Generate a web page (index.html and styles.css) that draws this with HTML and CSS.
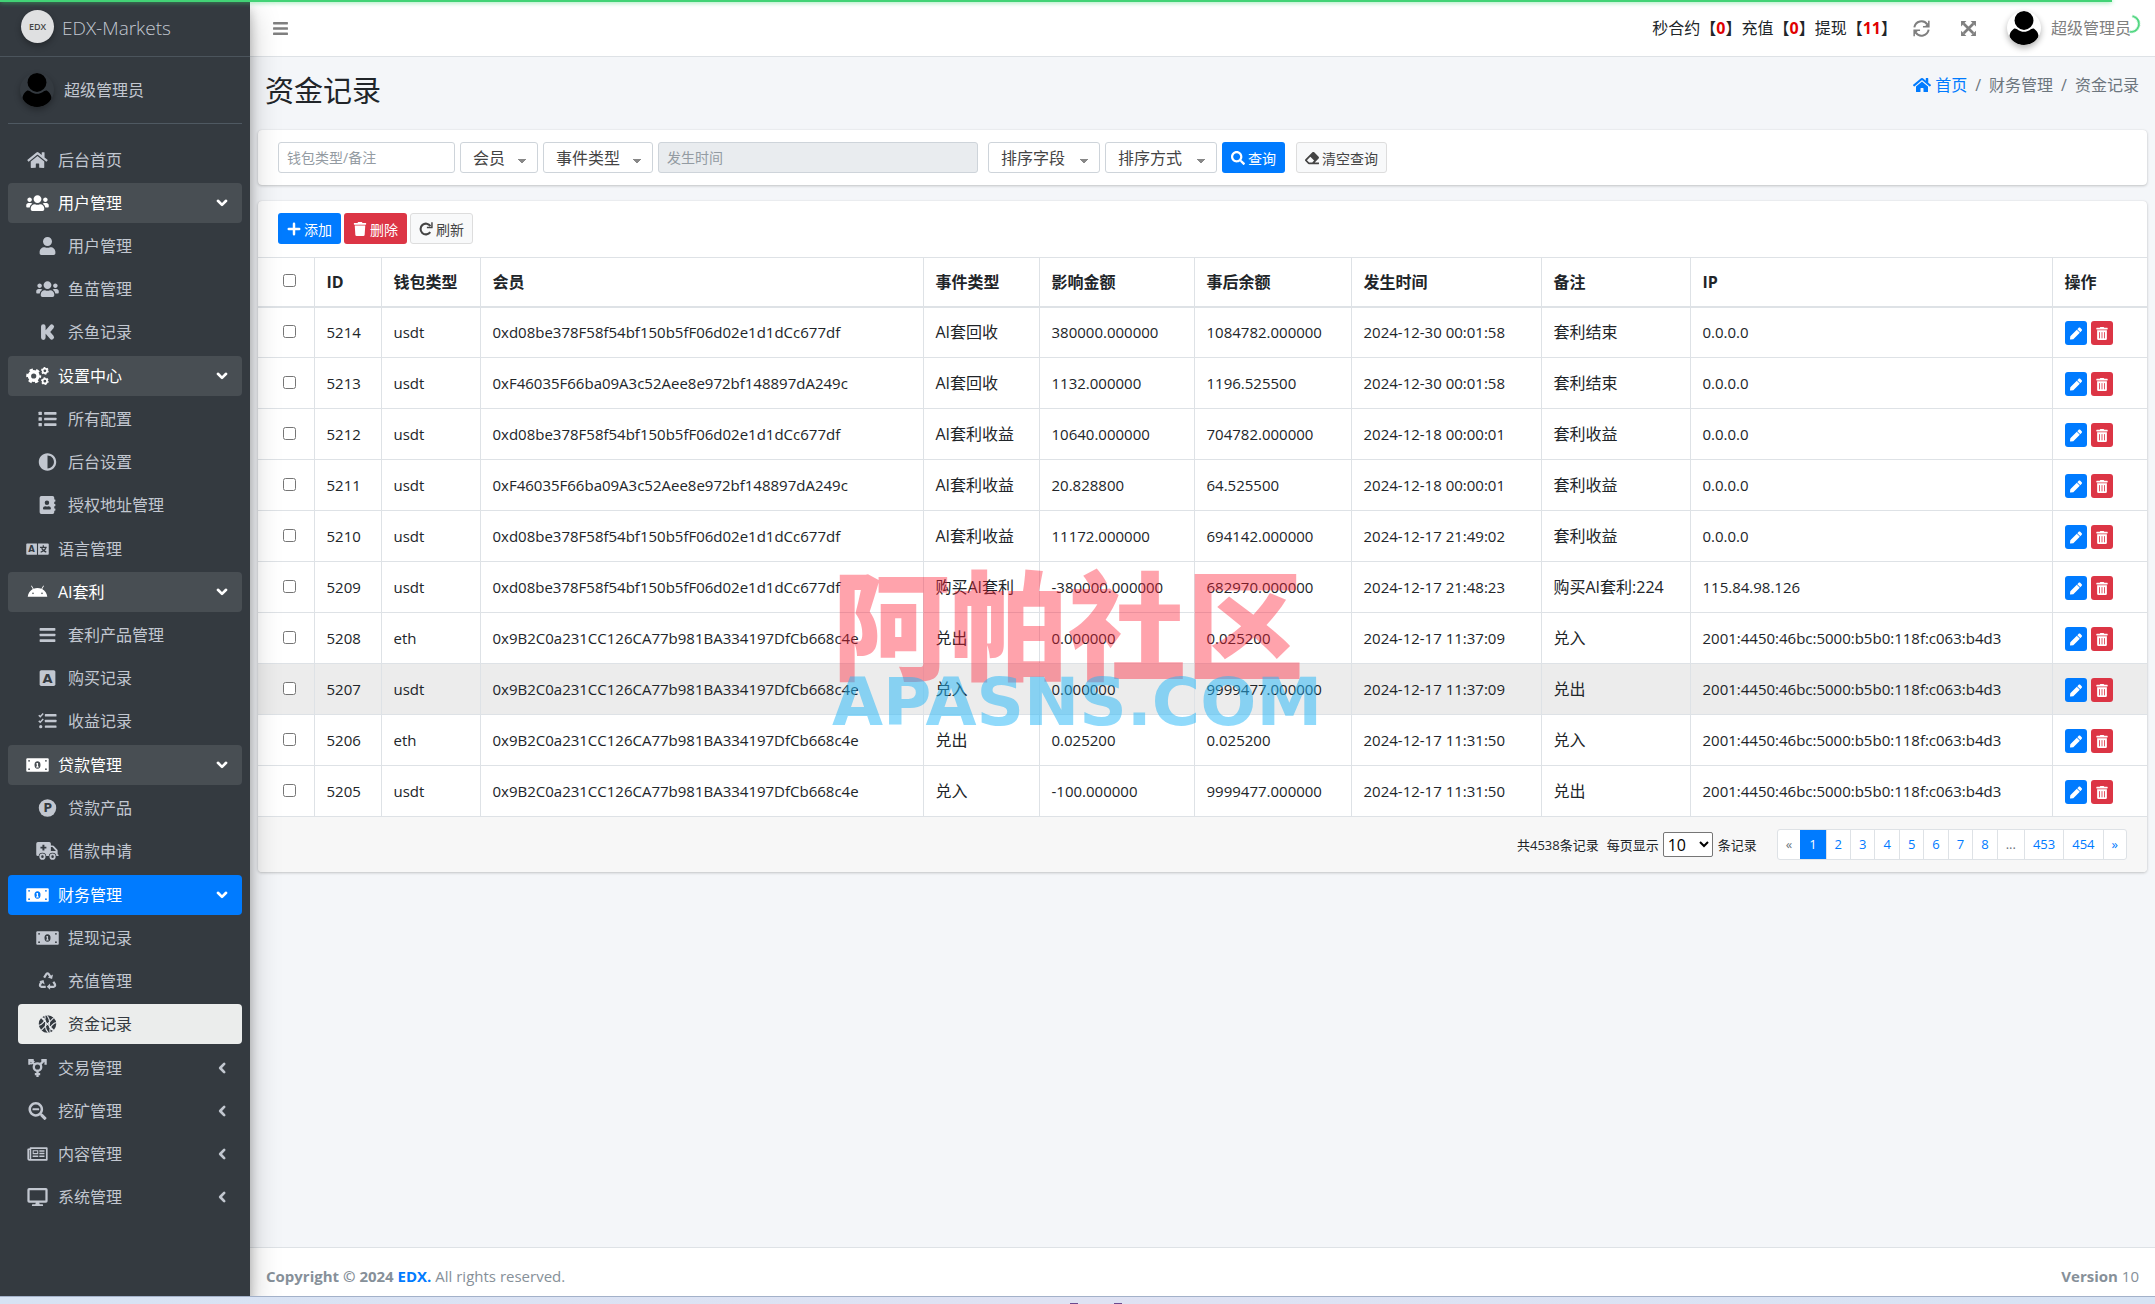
FILE: index.html
```
<!DOCTYPE html>
<html lang="zh-CN">

<head>
    <meta charset="UTF-8">
    <meta name="viewport" content="width=device-width, initial-scale=1.0">
    <title>资金记录</title>
    <link rel="stylesheet" href="styles.css">
</head>

<body>

    <!-- 图标 -->
    <svg class="sprite" aria-hidden="true">
        <symbol id="i-home" viewBox="0 0 576 512"><path d="M280.37 148.26L96 300.11V464a16 16 0 0 0 16 16l112.06-.29a16 16 0 0 0 15.92-16V368a16 16 0 0 1 16-16h64a16 16 0 0 1 16 16v95.64a16 16 0 0 0 16 16.05L464 480a16 16 0 0 0 16-16V300L295.67 148.26a12.19 12.19 0 0 0-15.3 0zM571.6 251.47L488 182.56V44.05a12 12 0 0 0-12-12h-56a12 12 0 0 0-12 12v72.61L318.47 43a48 48 0 0 0-61 0L4.34 251.47a12 12 0 0 0-1.6 16.9l25.5 31A12 12 0 0 0 45.15 301l235.22-193.74a12.19 12.19 0 0 1 15.3 0L530.9 301a12 12 0 0 0 16.9-1.6l25.5-31a12 12 0 0 0-1.7-16.93z"/></symbol>
        <symbol id="i-users" viewBox="0 0 640 512"><path d="M96 224c35.3 0 64-28.7 64-64s-28.7-64-64-64-64 28.7-64 64 28.7 64 64 64zm448 0c35.3 0 64-28.7 64-64s-28.7-64-64-64-64 28.7-64 64 28.7 64 64 64zm32 32h-64c-17.6 0-33.5 7.1-45.1 18.6 40.3 22.1 68.9 62 75.1 109.4h66c17.7 0 32-14.3 32-32v-32c0-35.3-28.7-64-64-64zm-256 0c61.9 0 112-50.1 112-112S381.9 32 320 32 208 82.1 208 144s50.1 112 112 112zm76.8 32h-8.3c-20.8 10-43.9 16-68.5 16s-47.6-6-68.5-16h-8.3C179.6 288 128 339.6 128 403.2V432c0 26.5 21.5 48 48 48h288c26.5 0 48-21.5 48-48v-28.8c0-63.6-51.6-115.2-115.2-115.2zm-223.7-13.4C161.5 263.1 145.6 256 128 256H64c-35.3 0-64 28.7-64 64v32c0 17.7 14.3 32 32 32h65.9c6.3-47.4 34.9-87.3 75.2-109.4z"/></symbol>
        <symbol id="i-user" viewBox="0 0 448 512"><path d="M224 256c70.7 0 128-57.3 128-128S294.7 0 224 0 96 57.3 96 128s57.3 128 128 128zm89.6 32h-16.7c-22.2 10.2-46.9 16-72.9 16s-50.6-5.8-72.9-16h-16.7C60.2 288 0 348.2 0 422.4V464c0 26.5 21.5 48 48 48h352c26.5 0 48-21.5 48-48v-41.6c0-74.2-60.2-134.4-134.4-134.4z"/></symbol>
        <symbol id="i-avatar" viewBox="0 0 34 36"><circle cx="17" cy="10" r="10"/><path d="M6 19c3-2 5 3 11 3s8-5 11-3c3 2 5 6 4 9-2 5-8 8-15 8S4 33 2 28c-1-3 1-7 4-9z"/></symbol>
        <symbol id="i-k" viewBox="0 0 448 512"><g fill="none" stroke="currentColor" stroke-width="130" stroke-linecap="round" stroke-linejoin="round"><path d="M105 97v318M345 105L215 256l130 151"/></g></symbol>
        <symbol id="i-cogs" viewBox="0 0 640 512"><g fill="none" stroke="currentColor"><circle cx="212" cy="256" r="122" stroke-width="96"/><circle cx="212" cy="256" r="182" stroke-width="62" stroke-dasharray="95 95.600" stroke-dashoffset="46"/><circle cx="530" cy="110" r="64" stroke-width="48"/><circle cx="530" cy="110" r="94" stroke-width="32" stroke-dasharray="50 48.400"/><circle cx="530" cy="402" r="64" stroke-width="48"/><circle cx="530" cy="402" r="94" stroke-width="32" stroke-dasharray="50 48.400"/></g></symbol>
        <symbol id="i-list" viewBox="0 0 512 512"><rect y="48" width="96" height="96" rx="16"/><rect y="208" width="96" height="96" rx="16"/><rect y="368" width="96" height="96" rx="16"/><rect x="160" y="60" width="352" height="72" rx="16"/><rect x="160" y="220" width="352" height="72" rx="16"/><rect x="160" y="380" width="352" height="72" rx="16"/></symbol>
        <symbol id="i-adjust" viewBox="0 0 512 512"><path d="M8 256c0 136.966 111.033 248 248 248s248-111.034 248-248S392.966 8 256 8 8 119.033 8 256zm248 184V72c101.705 0 184 82.311 184 184 0 101.705-82.311 184-184 184z"/></symbol>
        <symbol id="i-book" viewBox="0 0 448 512"><path fill-rule="evenodd" d="M48 0h320a48 48 0 0 1 48 48v48h20a12 12 0 0 1 12 12v40a12 12 0 0 1-12 12h-20v64h20a12 12 0 0 1 12 12v40a12 12 0 0 1-12 12h-20v64h20a12 12 0 0 1 12 12v40a12 12 0 0 1-12 12h-20v48a48 48 0 0 1-48 48H48a48 48 0 0 1-48-48V48A48 48 0 0 1 48 0zm160 128a64 64 0 1 0 0 128 64 64 0 0 0 0-128zM96 365c0 12 10 19 22 19h180c12 0 22-7 22-19v-19c0-32-30-58-67-58-12 0-20 8-45 8s-33-8-45-8c-37 0-67 26-67 58z"/></symbol>
        <symbol id="i-language" viewBox="0 0 640 512"><path fill-rule="evenodd" d="M24 96h280v320H24a24 24 0 0 1-24-24V120a24 24 0 0 1 24-24zM336 96h280a24 24 0 0 1 24 24v272a24 24 0 0 1-24 24H336z"/><g class="cut"><text x="152" y="340" font-size="240" text-anchor="middle">A</text><path d="M390 190h190v36H390zM468 150h34v60h-34zM540 215h38c-15 70-75 120-160 150l-16-34c75-25 120-60 138-116zM425 240l28-18c30 50 70 85 125 105l-16 36c-65-25-110-65-137-123z"/></g></symbol>
        <symbol id="i-android" viewBox="0 0 576 512"><path fill-rule="evenodd" d="M421 170l46-80a11 11 0 0 0-19-11l-48 83a302 302 0 0 0-224 0l-48-83a11 11 0 0 0-19 11l46 80C72 214 18 296 10 392h556c-8-96-62-178-145-222zM160 318a23 23 0 1 1 0-46 23 23 0 0 1 0 46zm256 0a23 23 0 1 1 0-46 23 23 0 0 1 0 46z"/></symbol>
        <symbol id="i-bars" viewBox="0 0 448 512"><rect y="60" width="448" height="72" rx="16"/><rect y="220" width="448" height="72" rx="16"/><rect y="380" width="448" height="72" rx="16"/></symbol>
        <symbol id="i-a" viewBox="0 0 448 512"><rect y="32" width="448" height="448" rx="48"/><text class="cut" x="224" y="390" font-size="370" text-anchor="middle">A</text></symbol>
        <symbol id="i-tasks" viewBox="0 0 512 512"><g fill="none" stroke="currentColor" stroke-width="42"><path d="M8 92l42 40 84-92M8 252l42 40 84-92"/></g><circle cx="64" cy="416" r="46"/><rect x="180" y="60" width="332" height="68" rx="16"/><rect x="180" y="222" width="332" height="68" rx="16"/><rect x="180" y="382" width="332" height="68" rx="16"/></symbol>
        <symbol id="i-money" viewBox="0 0 640 512"><rect y="64" width="640" height="384" rx="32"/><g class="cut"><ellipse cx="320" cy="256" rx="86" ry="104"/><circle cx="80" cy="138" r="26"/><circle cx="560" cy="138" r="26"/><circle cx="80" cy="374" r="26"/><circle cx="560" cy="374" r="26"/></g><path d="M296 196h40v104h20v28h-76v-28h20v-66h-20z"/></symbol>
        <symbol id="i-p" viewBox="0 0 512 512"><circle cx="256" cy="256" r="248"/><text class="cut" x="262" y="374" font-size="330" text-anchor="middle">P</text></symbol>
        <symbol id="i-ambulance" viewBox="0 0 640 512"><path fill-rule="evenodd" d="M48 0h320a48 48 0 0 1 48 48v48h44c13 0 25 5 34 14l100 100c9 9 14 21 14 34v108h8c13 0 24 11 24 24s-11 24-24 24H48a48 48 0 0 1-48-48V48A48 48 0 0 1 48 0zm368 144v112h144L460 144zM176 80v56h-56v48h56v56h56v-56h56v-48h-56V80z"/><circle class="cut" cx="176" cy="416" r="110"/><circle class="cut" cx="464" cy="416" r="110"/><g fill="none" stroke="currentColor" stroke-width="52"><circle cx="176" cy="416" r="62"/><circle cx="464" cy="416" r="62"/></g></symbol>
        <symbol id="i-recycle" viewBox="0 0 512 512"><g fill="none" stroke="currentColor" stroke-width="64" stroke-linejoin="round"><path d="M160 160l64-104q32-36 64 0l48 78M424 276l44 76q18 60-38 68H316M206 420H84q-56-8-38-68l50-84"/></g><path d="M266 158l120 40 26-128zM330 328v176l-96-88zM22 262l120-34 34 124z"/></symbol>
        <symbol id="i-ball" viewBox="0 0 512 512"><circle cx="256" cy="256" r="248"/><g class="hole"><path d="M70 70l372 372M442 70L70 442M170 0q50 120-30 210T0 300M342 512q-50-120 30-210t140-90M230 0q110 130 80 256t120 190M282 512q-110-130-80-256T82 66"/></g></symbol>
        <symbol id="i-gender" viewBox="0 0 512 512"><g fill="none" stroke="currentColor" stroke-width="66"><circle cx="256" cy="228" r="106"/><path d="M256 334v178M180 430h152M180 152L56 28M332 152L456 28M26 160V32h122M486 160V32H364M72 142l88-88"/></g></symbol>
        <symbol id="i-minus" viewBox="0 0 512 512"><path d="M505 442.7L405.3 343c-4.500-4.500-10.600-7-17-7H372c27.600-35.300 44-79.700 44-128C416 93.100 322.900 0 208 0S0 93.100 0 208s93.100 208 208 208c48.300 0 92.700-16.400 128-44v16.300c0 6.400 2.500 12.500 7 17l99.700 99.700c9.400 9.400 24.600 9.400 33.900 0l28.300-28.300c9.400-9.400 9.400-24.600.1-34zM208 346a138 138 0 1 1 0-276 138 138 0 0 1 0 276z"/><rect x="114" y="180" width="188" height="56" rx="12"/></symbol>
        <symbol id="i-news" viewBox="0 0 576 512"><path fill-rule="evenodd" d="M552 64H88c-13 0-24 11-24 24v8H24c-13 0-24 11-24 24v272c0 31 25 56 56 56h496c13 0 24-11 24-24V88c0-13-11-24-24-24zM56 400a8 8 0 0 1-8-8V144h16v248a8 8 0 0 1-8 8zm54 0V112h418v288zM150 150h160v110H150zm30 30v50h100v-50zM340 150h146v40H340zM340 220h146v40H340zM150 300h160v44H150zM340 300h146v44H340z"/></symbol>
        <symbol id="i-desktop" viewBox="0 0 576 512"><path fill-rule="evenodd" d="M528 0H48a48 48 0 0 0-48 48v320a48 48 0 0 0 48 48h192l-16 48h-72a24 24 0 0 0 0 48h272a24 24 0 0 0 0-48h-72l-16-48h192a48 48 0 0 0 48-48V48a48 48 0 0 0-48-48zM512 352H64V64h448z"/></symbol>
        <symbol id="i-angle" viewBox="0 0 256 512"><path d="M190 140L76 256l114 116" fill="none" stroke="currentColor" stroke-width="76" stroke-linejoin="round" stroke-linecap="round"/></symbol>
        <symbol id="i-plus" viewBox="0 0 448 512"><path d="M224 64v384M32 256h384" fill="none" stroke="currentColor" stroke-width="90" stroke-linecap="round"/></symbol>
        <symbol id="i-trash" viewBox="0 0 448 512"><path d="M432 32H312l-9.400-18.700A24 24 0 0 0 281.100 0H166.800a23.720 23.720 0 0 0-21.400 13.300L136 32H16A16 16 0 0 0 0 48v32a16 16 0 0 0 16 16h416a16 16 0 0 0 16-16V48a16 16 0 0 0-16-16zM53.200 467a48 48 0 0 0 47.900 45h245.800a48 48 0 0 0 47.900-45L416 128H32z"/></symbol>
        <symbol id="i-trash-alt" viewBox="0 0 448 512"><path d="M32 464a48 48 0 0 0 48 48h288a48 48 0 0 0 48-48V128H32zm272-256a16 16 0 0 1 32 0v224a16 16 0 0 1-32 0zm-96 0a16 16 0 0 1 32 0v224a16 16 0 0 1-32 0zm-96 0a16 16 0 0 1 32 0v224a16 16 0 0 1-32 0zM432 32H312l-9.400-18.700A24 24 0 0 0 281.100 0H166.800a23.720 23.720 0 0 0-21.400 13.300L136 32H16A16 16 0 0 0 0 48v32a16 16 0 0 0 16 16h416a16 16 0 0 0 16-16V48a16 16 0 0 0-16-16z"/></symbol>
        <symbol id="i-pen" viewBox="0 0 512 512"><path d="M290.740 93.240l128.020 128.020-277.990 277.990-114.140 12.600C11.350 513.540-1.560 500.620.14 485.340l12.700-114.220 277.900-277.880zm207.200-19.060l-60.110-60.110c-18.750-18.750-49.160-18.750-67.910 0l-56.550 56.550 128.020 128.020 56.550-56.550c18.750-18.760 18.750-49.160 0-67.910z"/></symbol>
        <symbol id="i-redo" viewBox="0 0 512 512"><path d="M418 150A196 196 0 1 0 412 372" fill="none" stroke="currentColor" stroke-width="76"/><path d="M500 12v200a12 12 0 0 1-12 12H288v-46l160-4V12z"/></symbol>
        <symbol id="i-search" viewBox="0 0 512 512"><path d="M505 442.700L405.300 343c-4.500-4.500-10.600-7-17-7H372c27.600-35.300 44-79.700 44-128C416 93.100 322.900 0 208 0S0 93.100 0 208s93.100 208 208 208c48.300 0 92.700-16.400 128-44v16.300c0 6.400 2.500 12.500 7 17l99.700 99.700c9.400 9.400 24.600 9.400 33.900 0l28.300-28.300c9.400-9.400 9.400-24.600.1-34zM208 336c-70.700 0-128-57.200-128-128 0-70.700 57.200-128 128-128 70.700 0 128 57.200 128 128 0 70.700-57.200 128-128 128z"/></symbol>
        <symbol id="i-eraser" viewBox="0 0 512 512"><path d="M497.941 273.941c18.745-18.745 18.745-49.137 0-67.882l-160-160c-18.745-18.745-49.136-18.746-67.883 0l-256 256c-18.745 18.745-18.745 49.137 0 67.882l96 96A48.004 48.004 0 0 0 144 480h356c6.627 0 12-5.373 12-12v-40c0-6.627-5.373-12-12-12H355.883l142.058-142.059zm-302.627-62.627l137.373 137.373L265.373 416H150.628l-80-80 124.686-124.686z"/></symbol>
        <symbol id="i-sync" viewBox="0 0 512 512"><g fill="none" stroke="currentColor" stroke-width="60"><path d="M40 220A218 218 0 0 1 430 130M472 292A218 218 0 0 1 82 382"/></g><path d="M500 24v200H300v-46h70l84-84V24zM12 488V288h200v46h-70l-84 84v70z"/></symbol>
        <symbol id="i-expand" viewBox="0 0 448 512"><path d="M80 112l288 288M368 112L80 400" stroke="currentColor" stroke-width="80"/><path d="M0 32h160L0 192zM448 32v160L288 32zM0 480V320l160 160zM448 480H288l160-160z"/></symbol>
    </svg>

    <div class="loading-bar"></div>
    <div class="loading-spinner"></div>

    <div class="wrapper">

        <aside class="sidebar">
            <a href="#" class="brand">
                <span class="brand-logo">EDX</span>
                <span class="brand-text">EDX-Markets</span>
            </a>
            <div class="user-panel">
                <svg class="avatar"><use href="#i-avatar"/></svg>
                <a href="#">超级管理员</a>
            </div>
            <nav class="menu">
                <a href="#"><svg class="icon"><use href="#i-home"/></svg>后台首页</a>
                <a href="#" class="open"><svg class="icon"><use href="#i-users"/></svg>用户管理<svg class="arrow"><use href="#i-angle"/></svg></a>
                <div class="submenu">
                    <a href="#"><svg class="icon"><use href="#i-user"/></svg>用户管理</a>
                    <a href="#"><svg class="icon"><use href="#i-users"/></svg>鱼苗管理</a>
                    <a href="#"><svg class="icon"><use href="#i-k"/></svg>杀鱼记录</a>
                </div>
                <a href="#" class="open"><svg class="icon"><use href="#i-cogs"/></svg>设置中心<svg class="arrow"><use href="#i-angle"/></svg></a>
                <div class="submenu">
                    <a href="#"><svg class="icon"><use href="#i-list"/></svg>所有配置</a>
                    <a href="#"><svg class="icon"><use href="#i-adjust"/></svg>后台设置</a>
                    <a href="#"><svg class="icon"><use href="#i-book"/></svg>授权地址管理</a>
                </div>
                <a href="#"><svg class="icon"><use href="#i-language"/></svg>语言管理</a>
                <a href="#" class="open"><svg class="icon"><use href="#i-android"/></svg>AI套利<svg class="arrow"><use href="#i-angle"/></svg></a>
                <div class="submenu">
                    <a href="#"><svg class="icon"><use href="#i-bars"/></svg>套利产品管理</a>
                    <a href="#"><svg class="icon"><use href="#i-a"/></svg>购买记录</a>
                    <a href="#"><svg class="icon"><use href="#i-tasks"/></svg>收益记录</a>
                </div>
                <a href="#" class="open"><svg class="icon"><use href="#i-money"/></svg>贷款管理<svg class="arrow"><use href="#i-angle"/></svg></a>
                <div class="submenu">
                    <a href="#"><svg class="icon"><use href="#i-p"/></svg>贷款产品</a>
                    <a href="#"><svg class="icon"><use href="#i-ambulance"/></svg>借款申请</a>
                </div>
                <a href="#" class="open active"><svg class="icon"><use href="#i-money"/></svg>财务管理<svg class="arrow"><use href="#i-angle"/></svg></a>
                <div class="submenu">
                    <a href="#"><svg class="icon"><use href="#i-money"/></svg>提现记录</a>
                    <a href="#"><svg class="icon"><use href="#i-recycle"/></svg>充值管理</a>
                    <a href="#" class="current"><svg class="icon"><use href="#i-ball"/></svg>资金记录</a>
                </div>
                <a href="#"><svg class="icon"><use href="#i-gender"/></svg>交易管理<svg class="arrow"><use href="#i-angle"/></svg></a>
                <a href="#"><svg class="icon"><use href="#i-minus"/></svg>挖矿管理<svg class="arrow"><use href="#i-angle"/></svg></a>
                <a href="#"><svg class="icon"><use href="#i-news"/></svg>内容管理<svg class="arrow"><use href="#i-angle"/></svg></a>
                <a href="#"><svg class="icon"><use href="#i-desktop"/></svg>系统管理<svg class="arrow"><use href="#i-angle"/></svg></a>
            </nav>
        </aside>

        <div class="page">
            <header class="navbar">
                <button type="button" class="nav-btn" aria-label="菜单"><svg><use href="#i-bars"/></svg></button>
                <div class="notice">秒合约【<b>0</b>】充值【<b>0</b>】提现【<b>11</b>】</div>
                <button type="button" class="nav-btn" aria-label="刷新"><svg><use href="#i-sync"/></svg></button>
                <button type="button" class="nav-btn" aria-label="全屏"><svg><use href="#i-expand"/></svg></button>
                <a href="#" class="nav-user"><svg class="avatar"><use href="#i-avatar"/></svg>超级管理员</a>
            </header>

            <main class="content">
                <div class="content-header">
                    <h1>资金记录</h1>
                    <div class="breadcrumb">
                        <a href="#"><svg><use href="#i-home"/></svg>首页</a>
                        <span>/</span>
                        <span>财务管理</span>
                        <span>/</span>
                        <span>资金记录</span>
                    </div>
                </div>

                <form class="card filter">
                    <input type="text" class="keyword" placeholder="钱包类型/备注" aria-label="钱包类型/备注">
                    <select class="w-member" aria-label="会员"><option>会员</option></select>
                    <select class="w-type" aria-label="事件类型"><option>事件类型</option></select>
                    <input type="text" class="date" placeholder="发生时间" aria-label="发生时间" readonly>
                    <select class="w-sort" aria-label="排序字段"><option>排序字段</option></select>
                    <select class="w-sort" aria-label="排序方式"><option>排序方式</option></select>
                    <button type="button" class="btn primary"><svg><use href="#i-search"/></svg>查询</button>
                    <button type="button" class="btn light clear"><svg><use href="#i-eraser"/></svg>清空查询</button>
                </form>

                <div class="card">
                    <div class="toolbar">
                        <button type="button" class="btn primary"><svg><use href="#i-plus"/></svg>添加</button>
                        <button type="button" class="btn danger"><svg><use href="#i-trash"/></svg>删除</button>
                        <button type="button" class="btn light"><svg><use href="#i-redo"/></svg>刷新</button>
                    </div>

                    <table>
                        <colgroup>
                            <col class="c-check">
                            <col class="c-id">
                            <col class="c-wallet">
                            <col class="c-member">
                            <col class="c-type">
                            <col class="c-amount">
                            <col class="c-after">
                            <col class="c-time">
                            <col class="c-note">
                            <col>
                            <col class="c-action">
                        </colgroup>
                        <thead>
                            <tr>
                                <th><input type="checkbox" aria-label="全选"></th>
                                <th>ID</th>
                                <th>钱包类型</th>
                                <th>会员</th>
                                <th>事件类型</th>
                                <th>影响金额</th>
                                <th>事后余额</th>
                                <th>发生时间</th>
                                <th>备注</th>
                                <th>IP</th>
                                <th>操作</th>
                            </tr>
                        </thead>
                        <tbody id="rows"></tbody>
                    </table>

                    <div class="card-footer">
                        <span>共4538条记录</span>
                        <label for="pageSize">每页显示</label>
                        <select id="pageSize"><option>10</option></select>
                        <span>条记录</span>
                        <div class="pagination">
                            <span class="edge">«</span>
                            <span class="on">1</span>
                            <a href="#">2</a>
                            <a href="#">3</a>
                            <a href="#">4</a>
                            <a href="#">5</a>
                            <a href="#">6</a>
                            <a href="#">7</a>
                            <a href="#">8</a>
                            <span>...</span>
                            <a href="#">453</a>
                            <a href="#">454</a>
                            <a href="#">»</a>
                        </div>
                    </div>
                </div>
            </main>

            <footer class="footer">
                <p><b>Copyright © 2024 <a href="#">EDX.</a></b> All rights reserved.</p>
                <p><b>Version</b> 10</p>
            </footer>
        </div>
    </div>

    <div class="taskbar"><i></i><i></i></div>

    <div class="watermark">
        <div class="wm-cn">阿帕社区</div>
        <div class="wm-en">APASNS.COM</div>
    </div>

    <script src="script.js"></script>
</body>

</html>
```
FILE: styles.css
```
* {
    margin: 0;
    padding: 0;
    box-sizing: border-box;
}

body {
    font-family: "Open Sans", "Noto Sans CJK SC", sans-serif;
    font-size: 16px;
    line-height: 24px;
    color: #212529;
    background-color: #f4f6f9;
    display: flex;
    flex-direction: column;
    min-height: 100vh;
}

a {
    color: #007bff;
    text-decoration: none;
}

button,
input,
select {
    font-family: inherit;
    font-size: inherit;
    color: inherit;
}

button {
    cursor: pointer;
}

svg {
    fill: currentColor;
    flex: none;
}

.sprite {
    display: none;
}

.sprite text {
    font-family: "DejaVu Sans", sans-serif;
    font-weight: bold;
}

.cut {
    fill: var(--cut, #343a40);
}

.hole {
    fill: none;
    stroke: #e9ecef;
    stroke-width: 30px;
}

/* 顶部加载进度 */
.loading-bar {
    position: fixed;
    top: 0;
    left: 0;
    z-index: 20;
    width: 98%;
    height: 2px;
    background-color: #42d376;
    box-shadow: 0 0 5px #42d376;
}

.loading-spinner {
    position: fixed;
    top: 15px;
    right: 15px;
    z-index: 20;
    width: 18px;
    height: 18px;
    border: 2px solid transparent;
    border-top-color: #42d376;
    border-left-color: #42d376;
    border-radius: 50%;
    transform: rotate(145deg);
}

.wrapper {
    flex: 1;
    display: flex;
}

/* 侧边栏 */
.sidebar {
    position: relative;
    z-index: 5;
    width: 250px;
    flex: none;
    background-color: #343a40;
    color: #c2c7d0;
    box-shadow: 0 14px 28px rgba(0, 0, 0, 0.25), 0 10px 10px rgba(0, 0, 0, 0.22);
}

.sidebar a {
    color: inherit;
}

.brand {
    display: flex;
    align-items: center;
    gap: 8px;
    height: 57px;
    padding: 0 21px;
    border-bottom: 1px solid #4b545c;
    font-size: 19px;
    font-weight: 300;
}

.brand-logo {
    width: 33px;
    height: 33px;
    margin-bottom: 4px;
    border-radius: 50%;
    background-color: #dfe0e1;
    color: #444;
    font-size: 9px;
    font-weight: 600;
    line-height: 33px;
    text-align: center;
    box-shadow: 0 3px 6px rgba(0, 0, 0, 0.3);
}

.avatar {
    width: 34px;
    height: 34px;
    color: #000;
    border-radius: 50%;
    box-shadow: 0 3px 6px rgba(0, 0, 0, 0.3);
}

.user-panel {
    display: flex;
    align-items: center;
    gap: 10px;
    height: 67px;
    margin: 0 8px 16px;
    padding: 0 12px;
    border-bottom: 1px solid #4f5962;
}

.menu {
    display: flex;
    flex-direction: column;
    padding: 0 8px;
}

.menu a {
    display: flex;
    align-items: center;
    height: 40px;
    margin-bottom: 3px;
    padding: 0 16px;
    border-radius: 4px;
}

.menu .icon {
    width: 27px;
    height: 18px;
    margin-right: 7px;
}

.menu .arrow {
    width: 12px;
    height: 18px;
    margin-left: auto;
    margin-right: -2px;
}

.menu .open {
    --cut: #484e53;
    color: #fff;
    background-color: #484e53;
}

.menu .open .arrow {
    transform: rotate(-90deg);
}

.menu .active {
    --cut: #007bff;
    background-color: #007bff;
}

.submenu {
    padding: 0 0 1px 10px;
}

.menu .current {
    color: #343a40;
    background-color: #ebedec;
}

/* 顶部导航 */
.page {
    flex: 1;
    min-width: 0;
    display: flex;
    flex-direction: column;
}

.navbar {
    display: flex;
    align-items: center;
    height: 57px;
    padding: 0 24px 0 7px;
    background-color: #fff;
    border-bottom: 1px solid #dee2e6;
}

.nav-btn {
    display: flex;
    align-items: center;
    justify-content: center;
    width: 47px;
    height: 40px;
    border: none;
    background: none;
    color: #7f7f7f;
}

.nav-btn svg {
    width: 17px;
    height: 17px;
}

.notice {
    margin-left: auto;
    margin-right: 1px;
}

.notice b {
    color: #e00000;
}

.nav-user {
    display: flex;
    align-items: center;
    gap: 10px;
    margin-left: 15px;
    color: #7f7f7f;
}

/* 内容区 */
.content {
    flex: 1;
    padding: 0 8px;
}

.content-header {
    display: flex;
    justify-content: space-between;
    align-items: flex-start;
    height: 73px;
    padding: 16px 8px 0 7px;
}

h1 {
    font-size: 29px;
    font-weight: 400;
    line-height: 35px;
}

.breadcrumb {
    display: flex;
    gap: 8px;
    color: #6c757d;
}

.breadcrumb a {
    display: flex;
    align-items: center;
    gap: 4px;
}

.breadcrumb svg {
    width: 18px;
    height: 16px;
}

.card {
    margin-bottom: 16px;
    background-color: #fff;
    border-radius: 4px;
    box-shadow: 0 0 1px rgba(0, 0, 0, 0.13), 0 1px 3px rgba(0, 0, 0, 0.2);
}

.filter,
.toolbar {
    display: flex;
    gap: 4px;
    padding: 12px 20px;
}

.filter {
    gap: 5px;
}

.filter input,
.filter select {
    height: 31px;
    border: 1px solid #ced4da;
    border-radius: 3px;
    background-color: #fff;
}

.filter input {
    padding: 0 8px;
    font-size: 14px;
}

.filter input::placeholder {
    color: #939ba2;
}

.filter .keyword {
    width: 177px;
}

.filter .date {
    width: 320px;
    margin-right: 5px;
    background-color: #e9ecef;
}

.filter select {
    appearance: none;
    padding: 0 12px;
    color: #444;
    background-image: linear-gradient(to bottom right, #888 50%, transparent 50%), linear-gradient(to bottom left, #888 50%, transparent 50%);
    background-position: right 11px top 16px, right 15px top 16px;
    background-size: 4px 5px;
    background-repeat: no-repeat;
}

.filter .w-member {
    width: 78px;
}

.filter .w-type {
    width: 110px;
}

.filter .w-sort {
    width: 112px;
}

.filter .clear {
    margin-left: 6px;
}

.btn {
    display: flex;
    align-items: center;
    justify-content: center;
    gap: 3px;
    height: 31px;
    padding: 0 8px;
    border: 1px solid transparent;
    border-radius: 3px;
    font-size: 14px;
}

.btn svg {
    width: 14px;
    height: 14px;
}

.primary {
    background-color: #007bff;
    color: #fff;
}

.danger {
    background-color: #dc3545;
    color: #fff;
}

.light {
    background-color: #f8f9fa;
    border-color: #ddd;
    color: #444;
}

.toolbar {
    gap: 3px;
    padding-bottom: 13px;
}

table {
    width: 100%;
    table-layout: fixed;
    border-collapse: collapse;
}

.c-check { width: 56px; }
.c-id { width: 67px; }
.c-wallet { width: 99px; }
.c-member { width: 443px; }
.c-type { width: 116px; }
.c-amount { width: 155px; }
.c-after { width: 157px; }
.c-time { width: 190px; }
.c-note { width: 149px; }
.c-action { width: 95px; }

th,
td {
    height: 51px;
    padding: 0 12px;
    border: 1px solid #dee2e6;
    text-align: left;
    white-space: nowrap;
}

th {
    height: 49px;
    border-bottom-width: 2px;
}

th:first-child,
td:first-child {
    padding-left: 25px;
    border-left: none;
}

th:last-child,
td:last-child {
    border-right: none;
}

td {
    font-size: 15px;
}

td.cn {
    font-size: 16px;
}

tr.hover {
    background-color: #ececec;
}

input[type="checkbox"] {
    display: block;
    width: 13px;
    height: 13px;
    margin-bottom: 2px;
}

.actions {
    display: flex;
    gap: 4px;
    padding-top: 2px;
}

.actions .btn {
    width: 22px;
    height: 24px;
    padding: 0;
}

.actions svg {
    width: 12px;
    height: 13px;
}

.card-footer {
    display: flex;
    align-items: center;
    justify-content: flex-end;
    padding: 12px 20px;
    background-color: #f7f7f7;
    border-radius: 0 0 4px 4px;
    font-size: 13px;
}

.card-footer label {
    margin-left: 8px;
}

.card-footer select {
    width: 50px;
    height: 25px;
    margin: 0 5px 0 4px;
    border: 1px solid #767676;
    border-radius: 2px;
    background-color: #fff;
    font-size: 16px;
    color: #000;
}

.pagination {
    display: flex;
    margin-left: 20px;
    border: 1px solid #dee2e6;
    border-radius: 3px;
    background-color: #fff;
    overflow: hidden;
}

.pagination > * {
    padding: 0 8px;
    line-height: 29px;
    border-left: 1px solid #dee2e6;
}

.pagination span {
    color: #6c757d;
}

.pagination .edge {
    border-left: none;
}

.pagination .on {
    margin: -1px 0;
    padding: 1px 9px;
    border-left: none;
    background-color: #007bff;
    color: #fff;
}

/* 页脚 */
.footer {
    display: flex;
    justify-content: space-between;
    align-items: center;
    height: 49px;
    padding: 8px 16px 0;
    background-color: #fff;
    border-top: 1px solid #dee2e6;
    color: #869099;
    font-size: 15px;
}

.footer p {
    white-space: pre;
}

.taskbar {
    display: flex;
    justify-content: center;
    align-items: flex-end;
    gap: 36px;
    position: relative;
    z-index: 6;
    height: 8px;
    padding-left: 36px;
    border-top: 1px solid #a3b1c9;
    background: linear-gradient(to right, #d7e3f4, #dfe2f3, #d7e3f4);
}

.taskbar i {
    width: 8px;
    height: 1px;
    background-color: #6b4a8f;
}

/* 水印 */
.watermark {
    position: absolute;
    top: 565px;
    left: 832px;
    z-index: 10;
    pointer-events: none;
    white-space: nowrap;
    font-weight: 900;
}

.wm-cn {
    font-family: "Noto Sans CJK SC", sans-serif;
    font-size: 118px;
    line-height: 110px;
    color: rgba(255, 25, 47, 0.4);
}

.wm-en {
    font-family: "DejaVu Sans", sans-serif;
    font-size: 66px;
    line-height: 56px;
    color: rgba(33, 181, 247, 0.5);
}
```
FILE: script.js
```
const A = '0xd08be378F58f54bf150b5fF06d02e1d1dCc677df';
const B = '0xF46035F66ba09A3c52Aee8e972bf148897dA249c';
const C = '0x9B2C0a231CC126CA77b981BA334197DfCb668c4e';
const IP6 = '2001:4450:46bc:5000:b5b0:118f:c063:b4d3';

const data = [
    [5214, 'usdt', A, 'AI套回收', '380000.000000', '1084782.000000', '2024-12-30 00:01:58', '套利结束', '0.0.0.0'],
    [5213, 'usdt', B, 'AI套回收', '1132.000000', '1196.525500', '2024-12-30 00:01:58', '套利结束', '0.0.0.0'],
    [5212, 'usdt', A, 'AI套利收益', '10640.000000', '704782.000000', '2024-12-18 00:00:01', '套利收益', '0.0.0.0'],
    [5211, 'usdt', B, 'AI套利收益', '20.828800', '64.525500', '2024-12-18 00:00:01', '套利收益', '0.0.0.0'],
    [5210, 'usdt', A, 'AI套利收益', '11172.000000', '694142.000000', '2024-12-17 21:49:02', '套利收益', '0.0.0.0'],
    [5209, 'usdt', A, '购买AI套利', '-380000.000000', '682970.000000', '2024-12-17 21:48:23', '购买AI套利:224', '115.84.98.126'],
    [5208, 'eth', C, '兑出', '0.000000', '0.025200', '2024-12-17 11:37:09', '兑入', IP6],
    [5207, 'usdt', C, '兑入', '0.000000', '9999477.000000', '2024-12-17 11:37:09', '兑出', IP6],
    [5206, 'eth', C, '兑出', '0.025200', '0.025200', '2024-12-17 11:31:50', '兑入', IP6],
    [5205, 'usdt', C, '兑入', '-100.000000', '9999477.000000', '2024-12-17 11:31:50', '兑出', IP6]
];

document.querySelector('#rows').innerHTML = data.map(row => {
    const cells = row.map((v, i) => `<td${i === 3 || i === 7 ? ' class="cn"' : ''}>${v}</td>`).join('');
    return `<tr${row[0] === 5207 ? ' class="hover"' : ''}>
        <td><input type="checkbox" aria-label="选择 ${row[0]}"></td>
        ${cells}
        <td><div class="actions">
            <button type="button" class="btn primary" aria-label="编辑"><svg><use href="#i-pen"/></svg></button>
            <button type="button" class="btn danger" aria-label="删除"><svg><use href="#i-trash-alt"/></svg></button>
        </div></td>
    </tr>`;
}).join('');
```
